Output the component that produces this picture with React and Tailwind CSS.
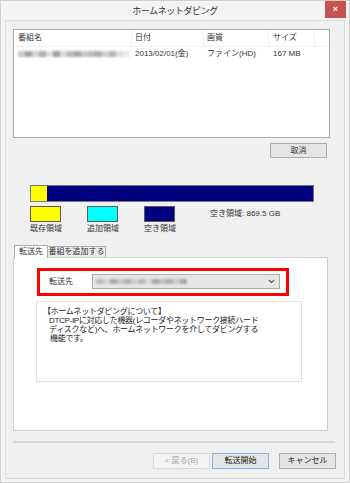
import React from 'react'

const font = { fontFamily: "'Liberation Sans', 'Noto Sans CJK JP', sans-serif" }

// ぼかし表示用のブロック
function Blur({ shades, h = 'h-[6px]' }) {
  return (
    <div className={`flex ${h} blur-[0.8px]`}>
      {shades.map((c, i) => (
        <span key={i} className={`w-[7px] h-full ${c}`} />
      ))}
    </div>
  )
}

const nameShades = [
  'bg-[#c8c8c8]', 'bg-[#a4a4a4]', 'bg-[#d4d4d4]', 'bg-[#b0b0b0]', 'bg-[#e0e0e0]', 'bg-[#a0a0a0]',
  'bg-[#d8d8d8]', 'bg-[#b8b8b8]', 'bg-[#a8a8a8]', 'bg-[#c8c8c8]', 'bg-[#bcbcbc]', 'bg-[#acacac]',
  'bg-[#d0d0d0]', 'bg-[#b4b4b4]', 'bg-[#dddddd]', 'bg-[#ececec]',
]

const selectShades = [
  'bg-[#bcbcbc]', 'bg-[#d4d4d4]', 'bg-[#a8a8a8]', 'bg-[#c6c6c6]', 'bg-[#b0b0b0]', 'bg-[#cecece]',
  'bg-[#b6b6b6]', 'bg-[#d8d8d8]', 'bg-[#a8a8a8]', 'bg-[#c0c0c0]', 'bg-[#acacac]', 'bg-[#cacaca]',
  'bg-[#a6a6a6]',
]

function Swatch({ color, label }) {
  return (
    <div className="flex flex-col items-start">
      <div className={`w-[31px] h-[16px] border border-[#5a5a5a] ${color}`} />
      <span className="mt-[2px] text-[8px] leading-[10px] text-[#333]">{label}</span>
    </div>
  )
}

export default function App() {
  return (
    <div style={font} className="w-[350px] h-[483px] bg-[#f4f4f4] border border-[#cfcfcf] flex flex-col text-[#222]">
      {/* タイトルバー */}
      <div className="relative h-[19px] flex items-center justify-center">
        <span className="text-[9px] tracking-[-0.4px] text-[#333] mt-[3px]">ホームネットダビング</span>
        <div className="absolute right-[3px] top-0 w-[21px] h-[17px] bg-[#c75050] flex items-center justify-center">
          <span className="text-white text-[9px] leading-none font-bold">×</span>
        </div>
      </div>

      {/* 本体 */}
      <div className="mx-[4px] h-[459px] border border-[#d9d9d9] bg-[#f0f0f0] flex flex-col">
        {/* 番組リスト */}
        <div className="ml-[7px] mt-[8px] w-[317px] h-[109px] border border-[#aaaaaa] bg-white flex flex-col">
          <div className="flex h-[17px] items-center border-b border-[#eef2f7] text-[8px] text-[#333]">
            <div className="w-[118px] pl-[4px] h-full flex items-center border-r border-[#eef2f7]">番組名</div>
            <div className="w-[72px] pl-[3px] h-full flex items-center border-r border-[#eef2f7]">日付</div>
            <div className="w-[65px] pl-[3px] h-full flex items-center border-r border-[#eef2f7]">画質</div>
            <div className="w-[46px] pl-[4px] h-full flex items-center border-r border-[#eef2f7]">サイズ</div>
          </div>
          <div className="flex h-[14px] items-center text-[8px] text-[#333]">
            <div className="w-[118px] pl-[4px]">
              <Blur shades={nameShades} />
            </div>
            <div className="w-[72px] pl-[3px]">2013/02/01(金)</div>
            <div className="w-[65px] pl-[3px]">ファイン(HD)</div>
            <div className="w-[46px] pl-[4px]">167 MB</div>
          </div>
        </div>

        <div className="ml-[7px] w-[317px] flex mt-[5px]">
          <button className="ml-auto mr-[3px] w-[57px] h-[15px] border border-[#adadad] bg-[#e5e5e5] text-[8px] text-[#333] flex items-center justify-center">
            取消
          </button>
        </div>

        {/* 容量バー */}
        <div className="ml-[24px] mt-[27px] w-[284px] h-[17px] border border-[#7a7a7a] bg-[#000080] flex">
          <div className="w-[16px] h-full bg-[#ffff00]" />
        </div>

        {/* 凡例 */}
        <div className="ml-[24px] mt-[4px] flex items-start">
          <Swatch color="bg-[#ffff00]" label="既存領域" />
          <div className="ml-[25px]">
            <Swatch color="bg-[#00ffff]" label="追加領域" />
          </div>
          <div className="ml-[25px]">
            <Swatch color="bg-[#000080]" label="空き領域" />
          </div>
          <span className="ml-[34px] mt-[3px] text-[8px] leading-[10px] text-[#333]">空き領域:&nbsp;869.5 GB</span>
        </div>

        {/* タブ */}
        <div className="ml-[8px] mt-[11px] flex items-end relative z-10">
          <div className="w-[34px] h-[13px] border border-b-0 border-[#acacac] bg-white text-[8px] text-[#333] flex items-center justify-center">
            転送先
          </div>
          <div className="w-[58px] h-[11px] border border-l-0 border-b-0 border-[#acacac] bg-[#ececec] text-[8px] text-[#333] flex items-center justify-center mb-px">
            番組を追加する
          </div>
        </div>
        <div className="ml-[7px] -mt-px w-[315px] h-[174px] border border-[#cfcfcf] bg-white flex flex-col">
          <div className="ml-[23px] mt-[10px] w-[252px] h-[28px] border-[3px] border-[#ff0000] flex items-start">
            <span className="ml-[9px] mt-[6px] text-[8px] leading-[10px] text-[#333]">転送先</span>
            <div className="ml-[19px] mt-[3px] w-[188px] h-[15px] border border-[#acacac] bg-[#e6e6e6] flex items-center px-[3px]">
              <Blur shades={selectShades} h="h-[5px]" />
              <svg className="ml-auto mr-[1px]" width="7" height="5" viewBox="0 0 7 5">
                <path d="M1 1.2 L3.5 3.6 L6 1.2" fill="none" stroke="#444" strokeWidth="1.1" />
              </svg>
            </div>
          </div>
          <div className="ml-[22px] mt-[5px] w-[266px] h-[81px] border border-[#e2e2e2] bg-white text-[8px] leading-[9px] tracking-[-0.3px] text-[#222] pt-[5px]">
            <div className="pl-[6px]">【ホームネットダビングについて】</div>
            <div className="pl-[12px]">DTCP-IPに対応した機器(レコーダやネットワーク接続ハード</div>
            <div className="pl-[12px]">ディスクなど)へ、ホームネットワークを介してダビングする</div>
            <div className="pl-[13px]">機能です。</div>
          </div>
        </div>

        {/* 区切り線 */}
        <div className="ml-[7px] mt-[10px] w-[322px] h-[2px] bg-[#d7d7d7]" />

        {/* ボタン */}
        <div className="mt-[10px] flex">
          <button className="ml-[147px] w-[57px] h-[16px] border border-[#d9d9d9] bg-[#f4f4f4] text-[8px] text-[#a3a3a3] flex items-center justify-center">
            &lt; 戻る(B)
          </button>
          <button className="ml-[2px] w-[57px] h-[16px] border border-[#7eb4ea] bg-[#e5e5e5] text-[8px] text-[#222] flex items-center justify-center">
            転送開始
          </button>
          <button className="ml-[10px] w-[57px] h-[16px] border border-[#adadad] bg-[#e5e5e5] text-[8px] text-[#222] flex items-center justify-center">
            キャンセル
          </button>
        </div>
      </div>
    </div>
  )
}
